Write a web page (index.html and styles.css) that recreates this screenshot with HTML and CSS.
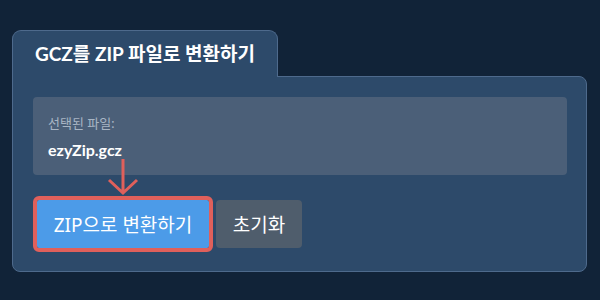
FILE: index.html
```html
<!DOCTYPE html>
<html lang="ko">
<head>
    <meta charset="UTF-8">
    <meta name="viewport" content="width=device-width, initial-scale=1.0">
    <title>GCZ를 ZIP 파일로 변환하기</title>
    <link rel="stylesheet" href="styles.css">
</head>
<body>
    <div class="converter">
        <div class="tab">GCZ를 ZIP 파일로 변환하기</div>
        <div class="panel">
            <div class="file-box">
                <div class="file-label">선택된 파일:</div>
                <div class="file-name">ezyZip.gcz</div>
            </div>
            <div class="actions">
                <!-- 화살표 표시 -->
                <svg class="hint-arrow" width="32" height="38" viewBox="0 0 32 38">
                    <path d="M16 1 V35 M2 22 L16 35 L30 22" fill="none" stroke="#e0605b" stroke-width="3"/>
                </svg>
                <button class="btn btn-convert">ZIP으로 변환하기</button>
                <button class="btn btn-reset">초기화</button>
            </div>
        </div>
    </div>
</body>
</html>
```

FILE: styles.css
```css
/* 기본 */
* { margin: 0; padding: 0; box-sizing: border-box; }
body { background: #112338; font-family: Lato, "Noto Sans CJK KR", sans-serif; color: #fff; padding: 30px 13px 0 12px; }

/* 탭 + 패널 */
.converter { display: flex; flex-direction: column; align-items: flex-start; }
.tab { position: relative; z-index: 1; margin-bottom: -1px; padding: 12px 22px 13px 22px; background: #2d4a6a; border: 1px solid #4e6a8c; border-bottom: none; border-radius: 9px 9px 0 0; font-size: 19px; font-weight: bold; line-height: 21px; height: 47px; }
.panel { width: 100%; background: #2d4a6a; border: 1px solid #4e6a8c; border-radius: 0 8px 8px 8px; padding: 20px 19px 23px 20px; }

/* 선택된 파일 */
.file-box { background: #4b5f78; border-radius: 4px; padding: 17px 15px 16px; height: 78px; }
.file-label { font-size: 13px; color: #a8b5c4; line-height: 18px; }
.file-name { font-size: 16px; font-weight: bold; line-height: 20px; margin-top: 8px; }

/* 버튼 */
.actions { position: relative; display: flex; gap: 7px; margin-top: 25px; }
.hint-arrow { position: absolute; left: 74px; top: -42px; }
.btn { height: 48px; border: none; border-radius: 4px; color: #fff; font-family: "Noto Sans", "Noto Sans CJK KR", sans-serif; font-size: 19px; padding: 0 10px; cursor: pointer; }
.btn-convert { background: #4c9be8; outline: 4px solid #e0605b; margin-left: 4px; width: 172px; border-radius: 2px; }
.btn-reset { background: #4f5d6c; width: 86px; }
```
